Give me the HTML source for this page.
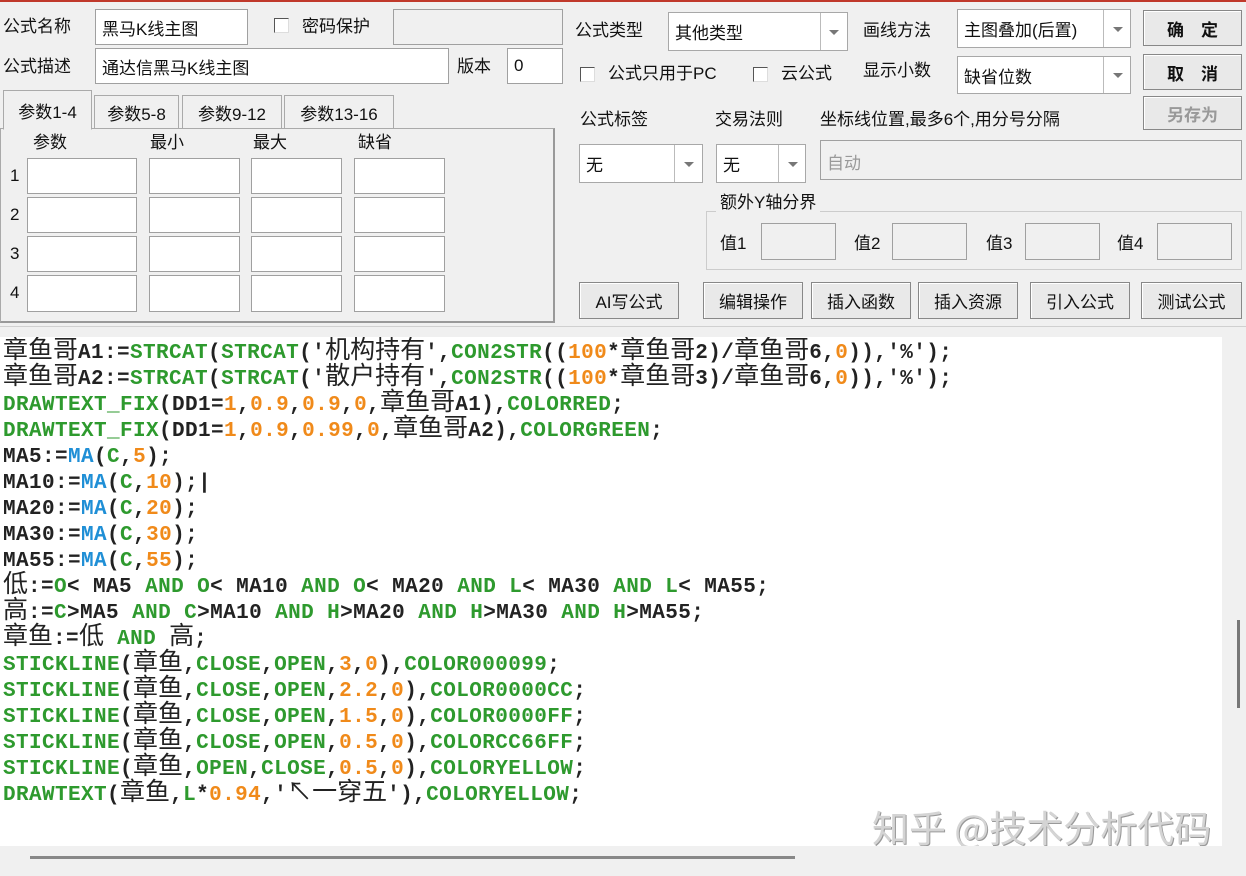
<!DOCTYPE html>
<html><head><meta charset="utf-8"><style>
*{box-sizing:border-box;margin:0;padding:0}
body{width:1246px;height:876px;background:#f0f0f0;position:relative;overflow:hidden;font-family:"Liberation Sans","Noto Sans CJK SC",sans-serif;font-size:17px;color:#111}
.a{position:absolute;white-space:nowrap}
.lb{position:absolute;white-space:nowrap;line-height:20px}
.in{position:absolute;background:#fff;border:1px solid #a0a0a0;padding-left:6px;display:flex;align-items:center}
.dis{background:#f0f0f0}
.cb{position:absolute;width:15px;height:15px;border:1px solid #555;border-right-color:#ddd;border-bottom-color:#ddd;background:#fff}
.cmb{position:absolute;background:#fff;border:1px solid #a8a8a8;display:flex;align-items:center;padding-left:6px}
.cmb .sp{position:absolute;top:0;bottom:0;width:1px;background:#bbb}
.cmb .ar{position:absolute;top:50%;margin-top:-2px;width:0;height:0;border-left:5px solid transparent;border-right:5px solid transparent;border-top:5px solid #777}
.bt{position:absolute;background:#e9e9e9;border:1px solid #888;box-shadow:inset 1px 1px 0 #fff;display:flex;align-items:center;justify-content:center}
.tab{position:absolute;border:1px solid #aaa;border-bottom:none;background:#f0f0f0;display:flex;align-items:center;justify-content:center;font-size:17px}
.ed{position:absolute;left:0;top:337px;width:1222px;height:509px;background:#fff;overflow:hidden}
.code{position:absolute;left:3px;top:4px;font-family:"Liberation Mono","Noto Sans CJK SC",monospace;font-weight:bold;font-size:21px;letter-spacing:0.4px;color:#222;white-space:normal}
.code div{height:26px;line-height:26px;overflow:visible;white-space:pre}
.c{font-family:"Noto Sans CJK SC",sans-serif;font-weight:normal;font-size:25px;line-height:0;letter-spacing:0;color:#222}
.g{color:#2e9a2e}.o{color:#f08a1a}.b{color:#1f8fd6}
</style></head><body>
<div class="a" style="left:0;top:0;width:1246px;height:2px;background:#c0392b"></div>

<div class="lb" style="left:3px;top:17px">公式名称</div>
<div class="in" style="left:95px;top:9px;width:153px;height:36px">黑马K线主图</div>
<div class="cb" style="left:274px;top:18px"></div>
<div class="lb" style="left:302px;top:17px">密码保护</div>
<div class="in dis" style="left:393px;top:9px;width:170px;height:36px"></div>
<div class="lb" style="left:3px;top:57px">公式描述</div>
<div class="in" style="left:95px;top:48px;width:354px;height:36px">通达信黑马K线主图</div>
<div class="lb" style="left:457px;top:57px">版本</div>
<div class="in" style="left:507px;top:48px;width:56px;height:36px">0</div>

<div class="a" style="left:0;top:128px;width:555px;height:195px;border:1px solid #aaa;border-right:2px solid #999;border-bottom:2px solid #999"></div>
<div class="tab" style="left:3px;top:90px;width:89px;height:40px;border-bottom:1px solid #f0f0f0">参数1-4</div>
<div class="tab" style="left:94px;top:95px;width:85px;height:33px">参数5-8</div>
<div class="tab" style="left:182px;top:95px;width:100px;height:33px">参数9-12</div>
<div class="tab" style="left:284px;top:95px;width:110px;height:33px">参数13-16</div>
<div class="lb" style="left:33px;top:133px">参数</div>
<div class="lb" style="left:150px;top:133px">最小</div>
<div class="lb" style="left:253px;top:133px">最大</div>
<div class="lb" style="left:358px;top:133px">缺省</div>
<div class="lb" style="left:10px;top:166px">1</div>
<div class="lb" style="left:10px;top:205px">2</div>
<div class="lb" style="left:10px;top:244px">3</div>
<div class="lb" style="left:10px;top:283px">4</div>

<div class="lb" style="left:575px;top:21px">公式类型</div>
<div class="cmb" style="left:668px;top:12px;width:180px;height:39px">其他类型<div class="sp" style="left:151px"></div><div class="ar" style="left:160px"></div></div>
<div class="lb" style="left:863px;top:21px">画线方法</div>
<div class="cmb" style="left:957px;top:9px;width:174px;height:39px">主图叠加(后置)<div class="sp" style="left:145px"></div><div class="ar" style="left:155px"></div></div>
<div class="bt" style="left:1143px;top:10px;width:99px;height:36px;font-weight:bold">确　定</div>
<div class="bt" style="left:1143px;top:54px;width:99px;height:36px;font-weight:bold">取　消</div>
<div class="bt" style="left:1143px;top:96px;width:99px;height:34px;color:#999;font-weight:bold">另存为</div>
<div class="cb" style="left:580px;top:67px"></div>
<div class="lb" style="left:608px;top:64px">公式只用于PC</div>
<div class="cb" style="left:753px;top:67px"></div>
<div class="lb" style="left:781px;top:64px">云公式</div>
<div class="lb" style="left:863px;top:61px">显示小数</div>
<div class="cmb" style="left:957px;top:56px;width:174px;height:38px">缺省位数<div class="sp" style="left:145px"></div><div class="ar" style="left:155px"></div></div>
<div class="lb" style="left:580px;top:110px">公式标签</div>
<div class="lb" style="left:715px;top:110px">交易法则</div>
<div class="lb" style="left:820px;top:110px">坐标线位置,最多6个,用分号分隔</div>
<div class="cmb" style="left:579px;top:144px;width:124px;height:39px">无<div class="sp" style="left:94px"></div><div class="ar" style="left:104px"></div></div>
<div class="cmb" style="left:716px;top:144px;width:90px;height:39px">无<div class="sp" style="left:61px"></div><div class="ar" style="left:71px"></div></div>
<div class="in dis" style="left:820px;top:140px;width:422px;height:40px;color:#999;align-items:flex-start;padding-top:8px">自动</div>
<div class="a" style="left:706px;top:211px;width:536px;height:59px;border:1px solid #ccc"></div>
<div class="lb" style="left:716px;top:193px;background:#f0f0f0;padding:0 4px">额外Y轴分界</div>
<div class="lb" style="left:720px;top:234px">值1</div>
<div class="in dis" style="left:761px;top:223px;width:75px;height:37px"></div>
<div class="lb" style="left:854px;top:234px">值2</div>
<div class="in dis" style="left:892px;top:223px;width:75px;height:37px"></div>
<div class="lb" style="left:986px;top:234px">值3</div>
<div class="in dis" style="left:1025px;top:223px;width:75px;height:37px"></div>
<div class="lb" style="left:1117px;top:234px">值4</div>
<div class="in dis" style="left:1157px;top:223px;width:75px;height:37px"></div>
<div class="bt" style="left:579px;top:282px;width:100px;height:37px">AI写公式</div>
<div class="bt" style="left:703px;top:282px;width:100px;height:37px">编辑操作</div>
<div class="bt" style="left:811px;top:282px;width:100px;height:37px">插入函数</div>
<div class="bt" style="left:918px;top:282px;width:100px;height:37px">插入资源</div>
<div class="bt" style="left:1030px;top:282px;width:100px;height:37px">引入公式</div>
<div class="bt" style="left:1141px;top:282px;width:101px;height:37px">测试公式</div>
<div class="a" style="left:0;top:326px;width:1246px;height:1px;background:#d0d0d0"></div>

<div class="ed"><div class="code"><div><span class="c">章鱼哥</span>A1:=<span class="g">STRCAT</span>(<span class="g">STRCAT</span>('<span class="c">机构持有</span>',<span class="g">CON2STR</span>((<span class="o">100</span>*<span class="c">章鱼哥</span>2)/<span class="c">章鱼哥</span>6,<span class="o">0</span>)),'%');</div><div><span class="c">章鱼哥</span>A2:=<span class="g">STRCAT</span>(<span class="g">STRCAT</span>('<span class="c">散户持有</span>',<span class="g">CON2STR</span>((<span class="o">100</span>*<span class="c">章鱼哥</span>3)/<span class="c">章鱼哥</span>6,<span class="o">0</span>)),'%');</div><div><span class="g">DRAWTEXT_FIX</span>(DD1=<span class="o">1</span>,<span class="o">0.9</span>,<span class="o">0.9</span>,<span class="o">0</span>,<span class="c">章鱼哥</span>A1),<span class="g">COLORRED</span>;</div><div><span class="g">DRAWTEXT_FIX</span>(DD1=<span class="o">1</span>,<span class="o">0.9</span>,<span class="o">0.99</span>,<span class="o">0</span>,<span class="c">章鱼哥</span>A2),<span class="g">COLORGREEN</span>;</div><div>MA5:=<span class="b">MA</span>(<span class="g">C</span>,<span class="o">5</span>);</div><div>MA10:=<span class="b">MA</span>(<span class="g">C</span>,<span class="o">10</span>);|</div><div>MA20:=<span class="b">MA</span>(<span class="g">C</span>,<span class="o">20</span>);</div><div>MA30:=<span class="b">MA</span>(<span class="g">C</span>,<span class="o">30</span>);</div><div>MA55:=<span class="b">MA</span>(<span class="g">C</span>,<span class="o">55</span>);</div><div><span class="c">低</span>:=<span class="g">O</span>&lt; MA5 <span class="g">AND</span> <span class="g">O</span>&lt; MA10 <span class="g">AND</span> <span class="g">O</span>&lt; MA20 <span class="g">AND</span> <span class="g">L</span>&lt; MA30 <span class="g">AND</span> <span class="g">L</span>&lt; MA55;</div><div><span class="c">高</span>:=<span class="g">C</span>&gt;MA5 <span class="g">AND</span> <span class="g">C</span>&gt;MA10 <span class="g">AND</span> <span class="g">H</span>&gt;MA20 <span class="g">AND</span> <span class="g">H</span>&gt;MA30 <span class="g">AND</span> <span class="g">H</span>&gt;MA55;</div><div><span class="c">章鱼</span>:=<span class="c">低</span> <span class="g">AND</span> <span class="c">高</span>;</div><div><span class="g">STICKLINE</span>(<span class="c">章鱼</span>,<span class="g">CLOSE</span>,<span class="g">OPEN</span>,<span class="o">3</span>,<span class="o">0</span>),<span class="g">COLOR000099</span>;</div><div><span class="g">STICKLINE</span>(<span class="c">章鱼</span>,<span class="g">CLOSE</span>,<span class="g">OPEN</span>,<span class="o">2.2</span>,<span class="o">0</span>),<span class="g">COLOR0000CC</span>;</div><div><span class="g">STICKLINE</span>(<span class="c">章鱼</span>,<span class="g">CLOSE</span>,<span class="g">OPEN</span>,<span class="o">1.5</span>,<span class="o">0</span>),<span class="g">COLOR0000FF</span>;</div><div><span class="g">STICKLINE</span>(<span class="c">章鱼</span>,<span class="g">CLOSE</span>,<span class="g">OPEN</span>,<span class="o">0.5</span>,<span class="o">0</span>),<span class="g">COLORCC66FF</span>;</div><div><span class="g">STICKLINE</span>(<span class="c">章鱼</span>,<span class="g">OPEN</span>,<span class="g">CLOSE</span>,<span class="o">0.5</span>,<span class="o">0</span>),<span class="g">COLORYELLOW</span>;</div><div><span class="g">DRAWTEXT</span>(<span class="c">章鱼</span>,<span class="g">L</span>*<span class="o">0.94</span>,'<span class="c">↖一穿五</span>'),<span class="g">COLORYELLOW</span>;</div></div>
<div class="a" style="left:872px;top:462px;font-family:'Noto Sans CJK SC',sans-serif;font-size:37px;color:#d4d4d4;text-shadow:1px 1px 0 #999">知乎 @技术分析代码</div>
</div>
<div class="a" style="left:1237px;top:620px;width:3px;height:88px;background:#777"></div>
<div class="a" style="left:30px;top:856px;width:765px;height:3px;background:#888"></div>

<div class="in" style="left:27px;top:158px;width:110px;height:36px"></div><div class="in" style="left:149px;top:158px;width:91px;height:36px"></div><div class="in" style="left:251px;top:158px;width:91px;height:36px"></div><div class="in" style="left:354px;top:158px;width:91px;height:36px"></div>
<div class="in" style="left:27px;top:197px;width:110px;height:36px"></div><div class="in" style="left:149px;top:197px;width:91px;height:36px"></div><div class="in" style="left:251px;top:197px;width:91px;height:36px"></div><div class="in" style="left:354px;top:197px;width:91px;height:36px"></div>
<div class="in" style="left:27px;top:236px;width:110px;height:36px"></div><div class="in" style="left:149px;top:236px;width:91px;height:36px"></div><div class="in" style="left:251px;top:236px;width:91px;height:36px"></div><div class="in" style="left:354px;top:236px;width:91px;height:36px"></div>
<div class="in" style="left:27px;top:275px;width:110px;height:37px"></div><div class="in" style="left:149px;top:275px;width:91px;height:37px"></div><div class="in" style="left:251px;top:275px;width:91px;height:37px"></div><div class="in" style="left:354px;top:275px;width:91px;height:37px"></div>
</body></html>
